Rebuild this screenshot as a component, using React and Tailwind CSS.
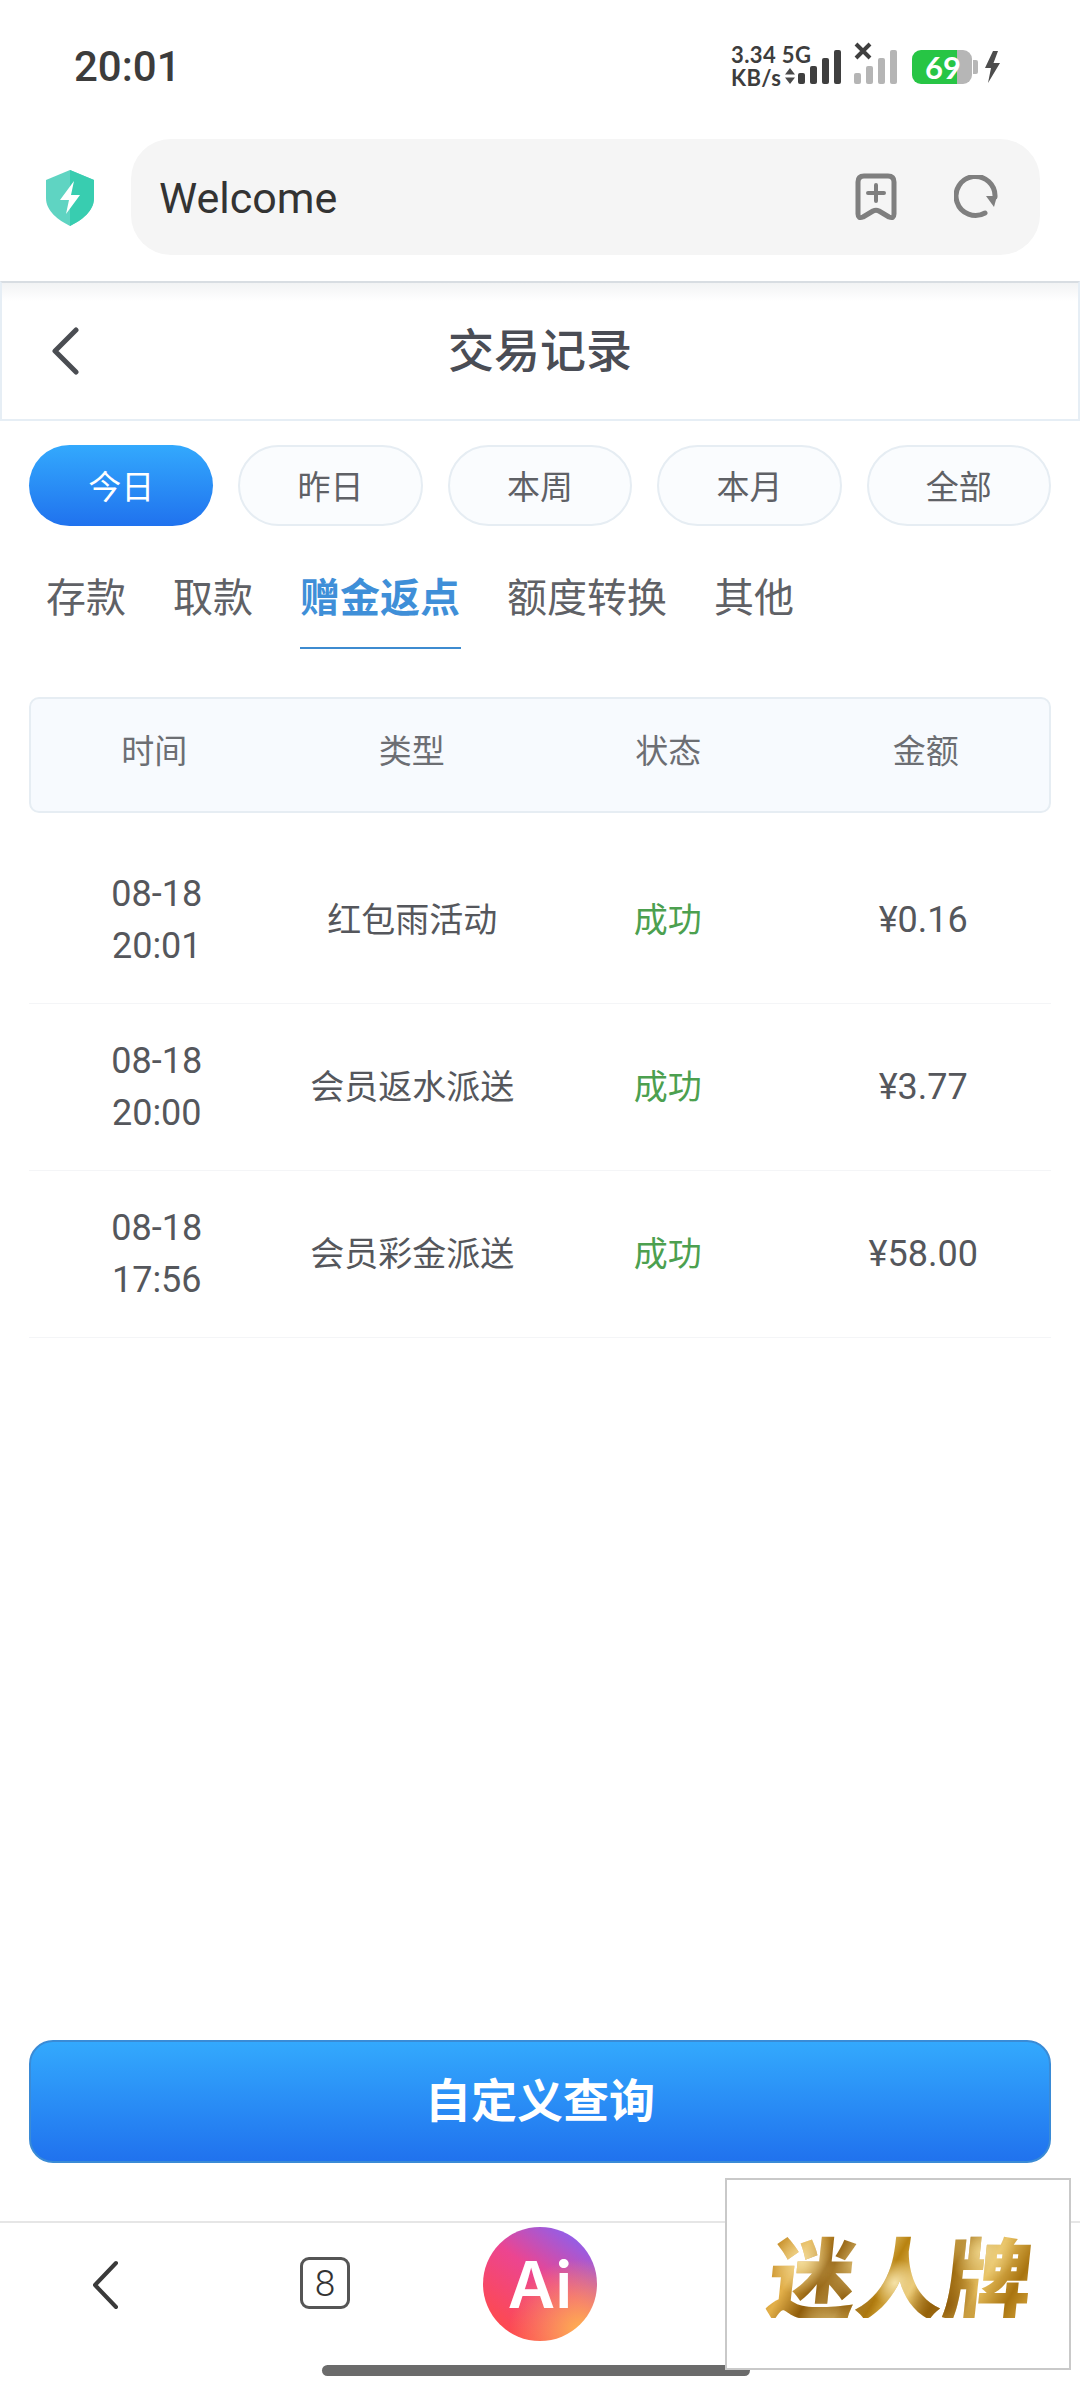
const SANS = "font-['Roboto','Noto_Sans_CJK_SC',sans-serif]";

const pills = ["今日", "昨日", "本周", "本月", "全部"];
const tabs = ["存款", "取款", "赠金返点", "额度转换", "其他"];
const rows = [
  ["08-18", "20:01", "红包雨活动", "¥0.16"],
  ["08-18", "20:00", "会员返水派送", "¥3.77"],
  ["08-18", "17:56", "会员彩金派送", "¥58.00"],
];

function Signal({ color }) {
  return (
    <svg width="43" height="34" viewBox="0 0 43 34">
      <rect x="0" y="23" width="7" height="11" rx="2" fill={color} />
      <rect x="12" y="16" width="7" height="18" rx="2" fill={color} />
      <rect x="24" y="8" width="7" height="26" rx="2" fill={color} />
      <rect x="36" y="0" width="7" height="34" rx="2" fill={color} />
    </svg>
  );
}

function StatusIcons() {
  return (
    <div className="flex items-start">
      <div className="flex flex-col w-[54px] text-[22px] font-bold leading-[23px] text-[#3d3d3d] font-['Lato',sans-serif] whitespace-nowrap tracking-[0.4px] mt-[-4px]">
        <span>3.34 5G</span>
        <span>KB/s</span>
      </div>
      <svg width="10" height="16" viewBox="0 0 10 16" className="mt-[21px]">
        <path d="M5 0 L10 6.5 H0 Z M0 9.5 H10 L5 16 Z" fill="#4a4a4a" />
      </svg>
      <div className="ml-[3px] mt-[3px]">
        <Signal color="#3f3f3f" />
      </div>
      <div className="relative ml-[13px] mt-[3px]">
        <Signal color="#b5b5b5" />
        <svg width="18" height="18" viewBox="0 0 18 18" className="absolute left-0 top-[-8px]">
          <path d="M2 2 L16 16 M16 2 L2 16" stroke="#3f3f3f" strokeWidth="4" />
        </svg>
      </div>
      <div className="relative ml-[15px] mt-[2px] w-[66px] h-[36px] flex items-center">
        <div className="w-[45px] h-[34px] bg-[#27c545] rounded-l-[9px]" />
        <div className="w-[15px] h-[34px] bg-[#b6b6b6] rounded-r-[9px]" />
        <div className="w-[5px] h-[14px] bg-[#b6b6b6] rounded-r-[2px] ml-[1px]" />
        <span className="absolute left-[12px] top-0 w-[38px] text-center text-[31px] leading-[36px] font-bold text-white font-['Lato',sans-serif]">69</span>
      </div>
      <svg width="17" height="32" viewBox="0 0 17 32" className="ml-[6px] mt-[4px]">
        <path d="M9 0 L1 17 H7 L4 32 L16 12 H9.5 L14 0 Z" fill="#4d4d4d" />
      </svg>
    </div>
  );
}

function Shield() {
  return (
    <svg width="48" height="56" viewBox="0 0 48 56">
      <path d="M24 0 L48 10 V28 C48 41 36 50 24 56 C12 50 0 41 0 28 V10 Z" fill="#5fd4c2" />
      <path d="M24 0 L48 10 V28 C48 41 36 50 24 56 Z" fill="#38cdb0" />
      <path d="M28 11 L14 30 H23 L20 44 L34 25 H25 Z" fill="#fff" />
    </svg>
  );
}

export default function App() {
  return (
    <div className={`relative w-[1080px] h-[2392px] overflow-hidden bg-white flex flex-col ${SANS}`}>
      {/* status bar */}
      <div className="h-[139px] shrink-0 flex items-start justify-between pl-[74px] pr-[79px] pt-[44px]">
        <span className="text-[42px] leading-[46px] font-medium text-[#3c3c3c]">20:01</span>
        <div className="pt-[3px]">
          <StatusIcons />
        </div>
      </div>

      {/* address bar */}
      <div className="h-[142px] shrink-0 flex items-start pl-[46px] pr-[40px]">
        <div className="w-[85px] pt-[31px]">
          <Shield />
        </div>
        <div className="flex-1 h-[116px] rounded-[40px] bg-[#f5f5f5] flex items-center pl-[28px] pr-[42px]">
          <span className="text-[43px] text-[#333333] pt-[2px]">Welcome</span>
          <div className="ml-auto flex items-center gap-[57px]">
            <svg width="42" height="48" viewBox="0 0 42 48" fill="none" stroke="#7f7f7f" strokeWidth="5" strokeLinecap="round" strokeLinejoin="round">
              <path d="M3 9 Q3 3 9 3 H33 Q39 3 39 9 V41 Q39 46 34 44 L24 38 Q21 36.5 18 38 L8 44 Q3 46 3 41 Z" />
              <path d="M21 12 V28 M13 20 H29" strokeWidth="4" />
            </svg>
            <svg width="44" height="44" viewBox="0 0 44 44" fill="none">
              <path d="M31 38 A19.5 19.5 0 1 1 41 22" stroke="#7f7f7f" strokeWidth="5" strokeLinecap="round" />
              <path d="M32 21 H43 L40 32 Z" fill="#7f7f7f" />
            </svg>
          </div>
        </div>
      </div>

      {/* header */}
      <div className="relative h-[140px] shrink-0 flex items-center justify-center border-[2px] border-[#e6eef5] border-t-[#d8dde2] bg-[linear-gradient(to_bottom,#f2f3f4_0px,#ffffff_18px)]">
        <svg width="30" height="48" viewBox="0 0 30 48" fill="none" className="absolute left-[48px] top-[44px]">
          <path d="M26 3 L5 24 L26 45" stroke="#4a4d52" strokeWidth="5" strokeLinecap="round" strokeLinejoin="round" />
        </svg>
        <span className="text-[46px] font-medium text-[#4a4d55] leading-none">交易记录</span>
      </div>

      {/* period pills */}
      <div className="mt-[24px] mx-[29px] grid grid-cols-5 gap-[25px] shrink-0">
        {pills.map((p, i) => (
          <div
            key={p}
            className={
              i === 0
                ? "h-[81px] rounded-full flex items-center justify-center pt-[5px] text-[33px] text-white bg-[linear-gradient(to_bottom,#33a9fd,#2072ee)]"
                : "h-[81px] rounded-full flex items-center justify-center pt-[5px] text-[33px] text-[#5f6166] bg-[#fafcfe] border-[2px] border-[#e6edf3]"
            }
          >
            {p}
          </div>
        ))}
      </div>

      {/* category tabs */}
      <div className="mt-[45px] pl-[46px] flex gap-[47px] shrink-0 h-[78px]">
        {tabs.map((t) => {
          const active = t === "赠金返点";
          return (
            <div key={t} className="relative h-[78px] pt-[2px]">
              <span className={active ? "block text-[40px] leading-[52px] font-bold text-[#3f8fd8]" : "block text-[40px] leading-[52px] text-[#5f6166]"}>
                {t}
              </span>
              {active && <div className="absolute left-0 right-[-1px] bottom-[0px] h-[2px] bg-[#3d8bd0]" />}
            </div>
          );
        })}
      </div>

      {/* table head */}
      <div className="mt-[48px] mx-[29px] h-[116px] shrink-0 grid grid-cols-4 items-center text-center text-[33px] leading-none text-[#6c6e73] bg-[#f7fafe] border-[2px] border-[#e6edf3] rounded-[10px] pb-[8px]">
        <span className="pr-[8px]">时间</span>
        <span className="pr-[2px]">类型</span>
        <span className="pl-[2px]">状态</span>
        <span className="pl-[8px]">金额</span>
      </div>

      {/* rows */}
      <div className="mt-[24px] mx-[29px] shrink-0">
        {rows.map((r) => (
          <div key={r[1]} className="h-[167px] grid grid-cols-4 items-center text-center text-[34px] text-[#55575c] border-b-[1px] border-[#f4f5f7]">
            <div className="flex flex-col text-[36px] leading-[52px]">
              <span>{r[0]}</span>
              <span>{r[1]}</span>
            </div>
            <span>{r[2]}</span>
            <span className="text-[#4ca04f]">成功</span>
            <span className="text-[36px]">{r[3]}</span>
          </div>
        ))}
      </div>

      <div className="flex-1" />

      {/* query button */}
      <div className="mx-[29px] h-[123px] shrink-0 rounded-[24px] border-[2px] border-[#3a8bd6] flex items-center justify-center text-[46px] font-bold text-white bg-[linear-gradient(to_bottom,#33a9fd,#2072ee)]">
        自定义查询
      </div>

      {/* bottom bar */}
      <div className="mt-[58px] h-[171px] shrink-0 border-t-[2px] border-[#e6e6e6] flex items-start">
        <svg width="30" height="50" viewBox="0 0 30 50" fill="none" className="ml-[90px] mt-[37px]">
          <path d="M26 3 L5 25 L26 47" stroke="#3a3a3a" strokeWidth="4" strokeLinecap="round" strokeLinejoin="round" />
        </svg>
        <div className="ml-[180px] mt-[34px] w-[50px] h-[52px] rounded-[9px] border-[3px] border-[#555555] flex items-center justify-center text-[37px] font-light text-[#333333] leading-none">
          8
        </div>
        <div className="ml-[133px] mt-[4px] w-[114px] h-[114px] rounded-full flex items-center justify-center text-[65px] leading-none font-semibold text-white font-['Inter',sans-serif] bg-[radial-gradient(circle_at_85%_90%,#ffb050_0%,transparent_50%),linear-gradient(35deg,#ff4a4a_10%,#ec4590_55%,#8a60f0_90%)]">
          Ai
        </div>
      </div>

      {/* home indicator */}
      <div className="absolute left-[322px] top-[2365px] w-[428px] h-[11px] rounded-full bg-[#6b6b6b]" />

      {/* floating logo */}
      <div className="absolute left-[725px] top-[2178px] w-[346px] h-[192px] bg-white border-[2px] border-[#c9c9c9] flex items-center justify-center pl-[6px]">
        <span className="text-[88px] leading-none font-black -skew-x-6 bg-clip-text text-transparent font-['Noto_Sans_CJK_SC',sans-serif] bg-[radial-gradient(circle_at_12%_35%,#f3dc9a_0%,transparent_14%),radial-gradient(circle_at_48%_60%,#f5e2a8_0%,transparent_16%),radial-gradient(circle_at_80%_25%,#efd58a_0%,transparent_15%),radial-gradient(circle_at_30%_80%,#8a5808_0%,transparent_18%),radial-gradient(circle_at_68%_85%,#8f5c0a_0%,transparent_18%),linear-gradient(115deg,#b77a12_0%,#e3b04a_14%,#8f5c0a_24%,#f0d58a_36%,#b8820f_46%,#e9c66f_56%,#9a6609_66%,#e8c05f_78%,#a9740f_90%,#d6a63e_100%)]">
          迷人牌
        </span>
      </div>
    </div>
  );
}
